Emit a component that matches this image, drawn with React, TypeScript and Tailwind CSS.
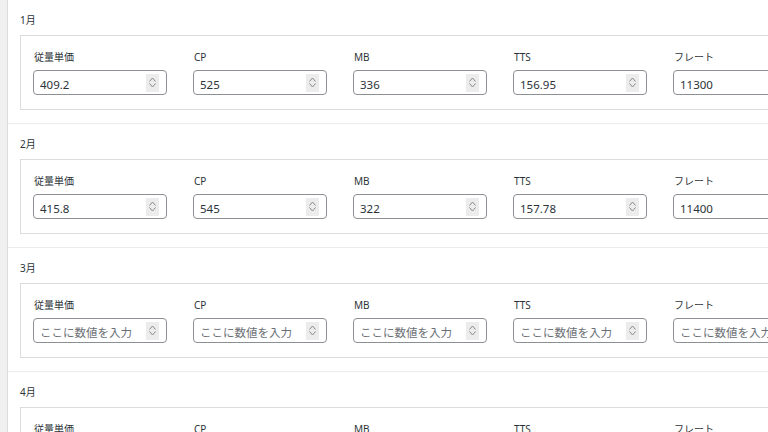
import { type ReactNode } from 'react'

type Month = { label: string; values: (string | null)[] }

const FIELDS = ['従量単価', 'CP', 'MB', 'TTS', 'フレート']

const MONTHS: Month[] = [
  { label: '1月', values: ['409.2', '525', '336', '156.95', '11300'] },
  { label: '2月', values: ['415.8', '545', '322', '157.78', '11400'] },
  { label: '3月', values: [null, null, null, null, null] },
  { label: '4月', values: [null, null, null, null, null] },
]

function Spinner() {
  return (
    <span className="pointer-events-none absolute right-[7px] top-1/2 flex h-[18px] w-[13px] -translate-y-1/2 flex-col items-center justify-center gap-[1px] bg-[#ececec]">
      <svg width="7" height="5" viewBox="0 0 7 5" fill="none" stroke="#8a8a8a" strokeWidth="1">
        <path d="M0.5 4.5 L3.5 1 L6.5 4.5" />
      </svg>
      <svg width="7" height="5" viewBox="0 0 7 5" fill="none" stroke="#8a8a8a" strokeWidth="1">
        <path d="M0.5 0.5 L3.5 4 L6.5 0.5" />
      </svg>
    </span>
  )
}

function NumberField({ label, value }: { label: string; value: string | null }) {
  return (
    <div className="flex w-[134px] shrink-0 flex-col">
      <span className="h-[14px] pl-[1px] text-[10px] leading-[14px] text-[#2c3338]">{label}</span>
      <div className="relative mt-[6px] h-[25px] w-[134px] rounded-[4px] border border-[#8c8f94] bg-white">
        <input
          readOnly
          value={value ?? ''}
          placeholder="ここに数値を入力"
          className="h-full w-full rounded-[4px] bg-transparent pl-[6px] pr-6 pt-[1px] text-[11.5px] text-[#2c3338] outline-none placeholder:text-[#6b6f74]"
        />
        <Spinner />
      </div>
    </div>
  )
}

function MonthSection({ month, children }: { month: Month; children?: ReactNode }) {
  return (
    <section className="border-b border-[#ececed] pl-3 pt-[13px] pb-[13px]">
      <h3 className="h-[14px] text-[10px] leading-[14px] text-[#2c3338]">{month.label}</h3>
      <div className="mt-2 flex w-[900px] gap-[26px] border border-[#dcdcde] bg-white pl-[12px] pt-[14px] pb-[14px]">
        {FIELDS.map((f, i) => (
          <NumberField key={f} label={f} value={month.values[i]} />
        ))}
      </div>
      {children}
    </section>
  )
}

export default function App() {
  return (
    <div
      className="flex h-[432px] w-[768px] overflow-hidden bg-white"
      style={{ fontFamily: '"Noto Sans", "Noto Sans CJK JP", sans-serif' }}
    >
      <div className="w-[8px] shrink-0 border-r border-[#dcdcde] bg-[#f0f0f1]" />
      <div className="flex min-w-0 flex-1 flex-col">
        {MONTHS.map((m) => (
          <MonthSection key={m.label} month={m} />
        ))}
      </div>
    </div>
  )
}
